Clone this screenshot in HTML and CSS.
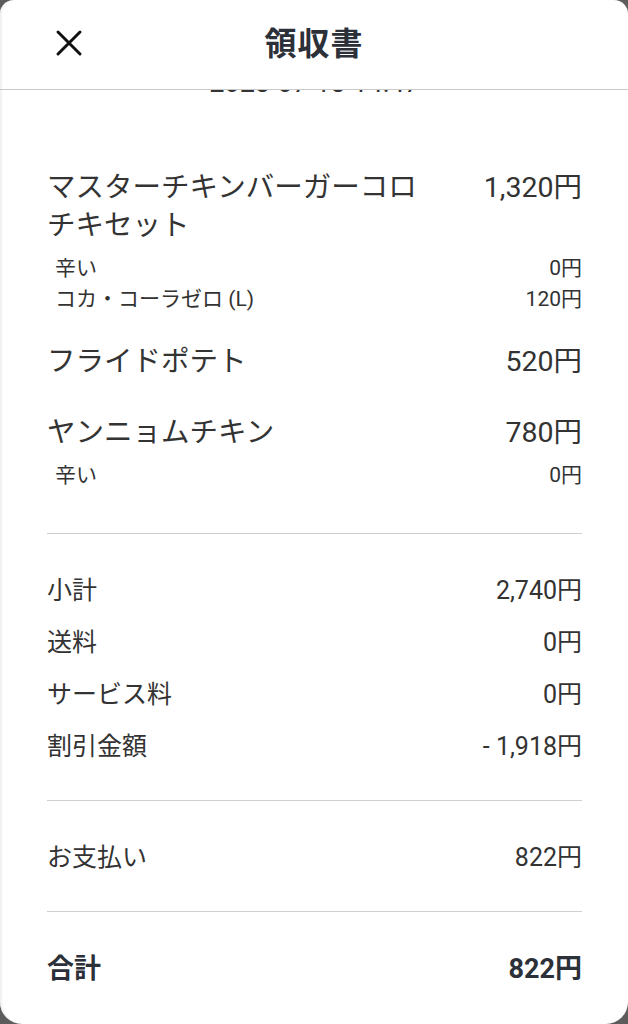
FILE: index.html
```html
<!DOCTYPE html>
<html lang="ja">
<head>
    <meta charset="UTF-8">
    <meta name="viewport" content="width=device-width, initial-scale=1.0">
    <title>領収書</title>
    <link rel="stylesheet" href="styles.css">
</head>
<body>
    <div class="sheet">
        <!-- Header -->
        <header class="topbar">
            <button class="close-btn" aria-label="閉じる">
                <svg width="28" height="28" viewBox="0 0 28 28">
                    <path d="M3 3 L25 25 M25 3 L3 25" stroke="#111" stroke-width="3" stroke-linecap="round" fill="none"/>
                </svg>
            </button>
            <h1>領収書</h1>
            <span></span>
        </header>

        <!-- Scrolled receipt body -->
        <div class="scroll">
            <div class="receipt">
                <p class="date">2023-07-13 14:47</p>

                <div class="items">
                    <div class="item">
                        <div class="item-row">
                            <span class="item-name">マスターチキンバーガーコロチキセット</span>
                            <span class="item-price">1,320円</span>
                        </div>
                        <div class="options">
                            <div class="option"><span>辛い</span><span>0円</span></div>
                            <div class="option"><span>コカ・コーラゼロ (L)</span><span>120円</span></div>
                        </div>
                    </div>
                    <div class="item">
                        <div class="item-row">
                            <span class="item-name">フライドポテト</span>
                            <span class="item-price">520円</span>
                        </div>
                    </div>
                    <div class="item">
                        <div class="item-row">
                            <span class="item-name">ヤンニョムチキン</span>
                            <span class="item-price">780円</span>
                        </div>
                        <div class="options">
                            <div class="option"><span>辛い</span><span>0円</span></div>
                        </div>
                    </div>
                </div>

                <div class="section">
                    <div class="line"><span>小計</span><span>2,740円</span></div>
                    <div class="line"><span>送料</span><span>0円</span></div>
                    <div class="line"><span>サービス料</span><span>0円</span></div>
                    <div class="line"><span>割引金額</span><span>- 1,918円</span></div>
                </div>

                <div class="section">
                    <div class="line"><span>お支払い</span><span>822円</span></div>
                </div>

                <div class="section total">
                    <div class="line"><span>合計</span><span>822円</span></div>
                </div>
            </div>
        </div>
    </div>
</body>
</html>
```

FILE: styles.css
```css
/* Page */
body {
    margin: 0;
    padding: 0;
    height: 1024px;
    background: #5c5c5c;
    font-family: Roboto, "Noto Sans CJK JP", sans-serif;
    color: #333;
    overflow: hidden;
}

.sheet {
    height: 1024px;
    background: #fff;
    border-radius: 14px 14px 22px 22px;
    box-shadow: inset 3px 0 3px -2px #e6e6e6;
    display: flex;
    flex-direction: column;
    overflow: hidden;
}

/* Header */
.topbar {
    height: 90px;
    flex-shrink: 0;
    display: grid;
    grid-template-columns: 1fr auto 1fr;
    align-items: center;
    border-bottom: 1px solid #c9c9c9;
    box-sizing: border-box;
}

.close-btn {
    justify-self: start;
    width: 28px;
    height: 28px;
    margin: -4px 0 0 55px;
    padding: 0;
    border: none;
    background: none;
    display: flex;
}

.topbar h1 {
    margin: 0 0 8px;
    font-family: "Noto Sans CJK JP", sans-serif;
    font-size: 32px;
    font-weight: 700;
    color: #2c3038;
    letter-spacing: 1px;
}

/* Body, scrolled so the date sits under the header */
.scroll {
    flex: 1;
    overflow: hidden;
}

.receipt {
    margin-top: -23px;
    padding: 0 46px 0 47px;
}

.date {
    margin: 0;
    height: 32px;
    line-height: 32px;
    text-align: center;
    font-size: 27px;
    color: #333;
}

/* Ordered items */
.items {
    padding: 70px 0 47px;
    border-bottom: 1px solid #cfcfcf;
}

.item + .item {
    margin-top: 33px;
}

.item-row {
    display: flex;
    justify-content: space-between;
    align-items: flex-start;
    gap: 40px;
    font-size: 28.5px;
    line-height: 38px;
}

.item-price {
    white-space: nowrap;
}

.options {
    margin: 8px 0 -5px;
    padding-left: 8px;
}

.option {
    display: flex;
    justify-content: space-between;
    font-size: 21px;
    line-height: 31px;
}

/* Totals */
.section {
    padding: 31px 0 27px;
    border-bottom: 1px solid #cfcfcf;
}

.line {
    display: flex;
    justify-content: space-between;
    font-size: 25px;
    line-height: 52px;
}

.total {
    border-bottom: none;
}

.total .line {
    font-size: 27px;
    font-weight: 700;
    color: #2c3038;
}
```
